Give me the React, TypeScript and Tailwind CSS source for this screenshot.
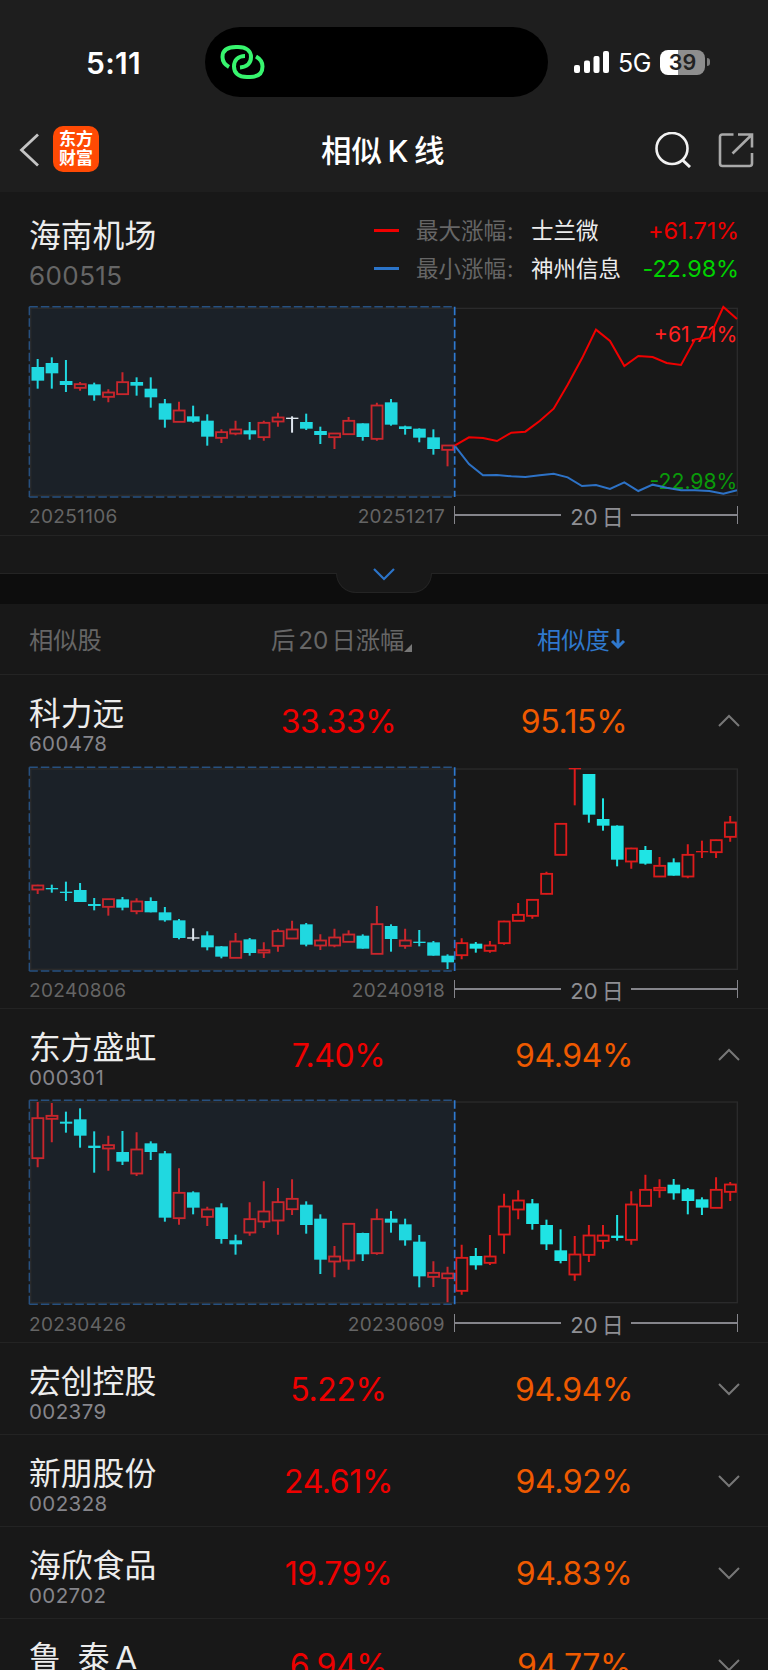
import { clsx } from "clsx";

// [kind, high, body top, body bottom, low]
type Candle = ["u" | "d" | "f", number, number, number, number];

type Stock = {
  name: string;
  code: string;
  gain: string;
  score: string;
  chart?: { from: string; to: string; top: number; bottom: number; candles: Candle[] };
};

const CURRENT: Candle[] = [
  ["d", 192, 216, 257, 281], ["d", 187, 204, 235, 281], ["d", 195, 258, 270, 291],
  ["u", 261, 267, 278, 287], ["d", 263, 268, 301, 317], ["u", 283, 292, 305, 322],
  ["u", 232, 261, 297, 299], ["d", 247, 261, 272, 302], ["d", 247, 281, 307, 338],
  ["d", 312, 325, 374, 398], ["u", 320, 346, 380, 380], ["d", 332, 364, 380, 383],
  ["d", 358, 377, 425, 452], ["u", 403, 411, 428, 444], ["u", 377, 403, 415, 421],
  ["d", 381, 406, 418, 434], ["u", 377, 383, 426, 437], ["u", 353, 367, 379, 395],
  ["f", 364, 370, 370, 413], ["d", 356, 381, 401, 405], ["d", 395, 408, 420, 447],
  ["u", 415, 415, 426, 462], ["u", 366, 377, 417, 420], ["d", 385, 385, 426, 437],
  ["u", 323, 331, 431, 437], ["d", 312, 322, 389, 392], ["d", 392, 394, 402, 419],
  ["d", 400, 401, 428, 442], ["d", 403, 427, 462, 479], ["u", 451, 451, 464, 514],
];

const KELIYUAN: Candle[] = [
  ["u", 389, 391, 403, 417], ["d", 389, 401, 401, 413], ["d", 380, 412, 412, 438],
  ["d", 384, 405, 441, 441], ["d", 429, 447, 453, 466], ["u", 432, 432, 455, 482],
  ["d", 426, 433, 458, 466], ["u", 430, 439, 468, 478], ["d", 427, 438, 472, 472],
  ["d", 456, 472, 496, 500], ["d", 492, 496, 549, 553], ["f", 520, 549, 549, 557],
  ["d", 529, 541, 577, 586], ["d", 573, 574, 605, 610], ["u", 534, 559, 608, 609],
  ["d", 549, 553, 594, 602], ["u", 562, 585, 592, 609], ["u", 521, 528, 572, 590],
  ["u", 497, 523, 550, 551], ["d", 504, 508, 569, 574], ["u", 538, 556, 571, 585],
  ["u", 521, 547, 571, 577], ["u", 526, 538, 560, 560], ["d", 538, 542, 581, 581],
  ["u", 453, 507, 596, 597], ["d", 508, 513, 552, 590], ["u", 521, 556, 572, 581],
  ["d", 525, 562, 562, 574], ["d", 558, 562, 602, 602], ["d", 598, 602, 622, 642],
  ["u", 550, 564, 600, 613], ["d", 561, 566, 581, 593], ["u", 558, 571, 587, 593],
  ["u", 497, 499, 564, 569], ["u", 444, 479, 497, 498], ["u", 432, 434, 482, 491],
  ["u", 350, 356, 416, 418], ["u", 206, 206, 299, 300], ["u", 41, 41, 41, 151],
  ["d", 57, 57, 179, 203], ["d", 130, 192, 212, 227], ["d", 211, 212, 314, 334],
  ["u", 278, 280, 319, 341], ["d", 273, 285, 326, 329], ["u", 306, 332, 364, 364],
  ["d", 310, 322, 362, 362], ["u", 268, 299, 364, 370], ["u", 257, 290, 290, 309],
  ["u", 254, 255, 291, 309], ["u", 183, 202, 245, 260],
];

const SHENGHONG: Candle[] = [
  ["u", 39, 87, 207, 235], ["u", 42, 80, 89, 160], ["d", 68, 100, 102, 131],
  ["d", 58, 91, 140, 176], ["d", 127, 172, 175, 251], ["u", 140, 168, 178, 245],
  ["d", 126, 189, 218, 228], ["u", 130, 181, 253, 261], ["d", 157, 163, 189, 213],
  ["d", 186, 193, 386, 398], ["u", 238, 311, 387, 407], ["d", 307, 310, 356, 376],
  ["u", 353, 361, 383, 411], ["d", 343, 355, 450, 464], ["d", 437, 454, 466, 497],
  ["u", 340, 390, 430, 440], ["u", 277, 367, 397, 417], ["u", 297, 339, 394, 437],
  ["u", 271, 329, 360, 378], ["d", 337, 347, 408, 434], ["d", 376, 389, 512, 555],
  ["u", 471, 502, 517, 565], ["u", 403, 404, 514, 542], ["d", 431, 432, 496, 516],
  ["u", 359, 390, 492, 497], ["d", 366, 389, 401, 431], ["d", 389, 406, 454, 470],
  ["d", 438, 458, 562, 595], ["u", 517, 551, 563, 594], ["u", 533, 553, 567, 640],
  ["u", 467, 506, 605, 617], ["d", 477, 501, 529, 542], ["u", 438, 502, 521, 528],
  ["u", 314, 352, 436, 494], ["u", 304, 334, 361, 391], ["d", 330, 343, 405, 422],
  ["d", 392, 408, 466, 483], ["d", 421, 484, 516, 523], ["u", 441, 496, 556, 575],
  ["u", 408, 439, 497, 519], ["u", 408, 439, 455, 479], ["d", 378, 442, 445, 455],
  ["u", 307, 346, 452, 467], ["u", 257, 302, 350, 351], ["u", 271, 296, 303, 326],
  ["d", 270, 287, 313, 332], ["d", 297, 301, 336, 376], ["d", 325, 331, 356, 378],
  ["u", 265, 302, 356, 357], ["u", 279, 286, 308, 336],
];

const MAX_LINE =
  "1364,452 1407,427 1449,429 1491,438 1534,413 1576,410 1619,378 1661,341 1703,269 1746,190 1788,104 1830,138 1873,213 1915,183 1958,186 2000,204 2043,210 2085,133 2128,127 2170,36 2211,72";
const MIN_LINE =
  "1364,452 1407,507 1449,541 1491,540 1534,544 1576,546 1619,541 1661,536 1703,547 1746,573 1788,570 1830,582 1873,562 1915,588 1958,569 2000,578 2043,586 2085,586 2128,588 2170,596 2211,586";

const STOCKS: Stock[] = [
  {
    name: "科力远", code: "600478", gain: "33.33%", score: "95.15%",
    chart: { from: "20240806", to: "20240918", top: 37, bottom: 648, candles: KELIYUAN },
  },
  {
    name: "东方盛虹", code: "000301", gain: "7.40%", score: "94.94%",
    chart: { from: "20230426", to: "20230609", top: 34, bottom: 646, candles: SHENGHONG },
  },
  { name: "宏创控股", code: "002379", gain: "5.22%", score: "94.94%" },
  { name: "新朋股份", code: "002328", gain: "24.61%", score: "94.92%" },
  { name: "海欣食品", code: "002702", gain: "19.79%", score: "94.83%" },
  { name: "鲁 泰\u2009A", code: "", gain: "6.94%", score: "94.77%" },
];

function CandleMark({ data, index }: { data: Candle; index: number }) {
  const [kind, high, top, bottom, low] = data;
  const x = 113 + index * 42.4;
  const past = index < 30;
  const color =
    kind === "f" ? "#dfe6ee" : kind === "d" ? (past ? "#20d8e0" : "#1fe4e4") : past ? "#c9262c" : "#dc1b1b";

  if (bottom - top < 4) {
    return (
      <g fill={color}>
        <rect x={x - 3} y={high} width={6} height={low - high} />
        <rect x={x - 18} y={top - 2} width={37} height={bottom - top + 4} />
      </g>
    );
  }
  if (kind === "d") {
    return (
      <g fill={color}>
        <rect x={x - 3} y={high} width={6} height={low - high} />
        <rect x={x - 18.5} y={top} width={38} height={bottom - top} />
      </g>
    );
  }
  return (
    <g fill="none" stroke={color} strokeWidth={5.5}>
      <path d={`M${x} ${high}V${top}M${x} ${bottom}V${low}`} strokeWidth={6} />
      <rect x={x - 16} y={top + 0.5} width={33} height={bottom - top} />
    </g>
  );
}

function Chart({
  top,
  bottom,
  candles,
  children,
}: {
  top: number;
  bottom: number;
  candles: Candle[];
  children?: React.ReactNode;
}) {
  const frameTop = top + 5;
  const frameBottom = bottom - 5;
  return (
    <svg
      viewBox={`0 0 2304 ${bottom > 620 ? 666 : 624}`}
      className={clsx("block w-full shrink-0", bottom > 620 ? "h-[222px]" : "h-[208px]")}
    >
      <rect x={88} y={top} width={1275} height={bottom - top} fill="#1b2128" />
      <rect x={92} y={frameTop} width={2120} height={frameBottom - frameTop} fill="none" stroke="#2a2a2b" strokeWidth={4} />
      {candles.map((c, i) => (
        <CandleMark key={i} data={c} index={i} />
      ))}
      <path
        d={`M88 ${top}H1363M88 ${bottom}H1363M88 ${top}V${bottom}`}
        stroke="#27507f"
        strokeWidth={4.5}
        strokeDasharray="25.5 9"
      />
      <path d={`M1364 ${top}V${bottom}`} stroke="#2e79d0" strokeWidth={5} strokeDasharray="25.5 9" />
      {children}
    </svg>
  );
}

function Axis({ from, to }: { from: string; to: string }) {
  return (
    <div className="mt-[3px] flex h-[18px] items-center pl-[29px] text-[19px] leading-none tracking-[0.35px] text-[#656565]">
      <div className="flex w-[416px] justify-between pt-[3px]">
        <span>{from}</span>
        <span>{to}</span>
      </div>
      <div className="ml-[9px] flex h-[18px] w-[284px] items-center justify-between border-x-[1.5px] border-[#85858b]">
        <span className="h-[2px] w-[106px] bg-[#85858b]" />
        <span className="flex gap-[4px] pt-[3px] pl-[2px] text-[22px] tracking-normal whitespace-nowrap text-[#8e8e93]">
          <span>20</span>
          <span>日</span>
        </span>
        <span className="h-[2px] w-[106px] bg-[#85858b]" />
      </div>
    </div>
  );
}

function StatusBar() {
  return (
    <div className="flex h-[108px] shrink-0 pt-[27px]">
      <div className="w-[205px] pt-[20px] pl-[86px] text-[30px] leading-[32px] font-semibold tracking-[0.3px] text-white">
        5:11
      </div>
      <div className="h-[70px] w-[343px] rounded-[35px] bg-black pt-[17px] pl-[15px]">
        <svg viewBox="0 0 46 36" className="h-[36px] w-[46px]" fill="none" stroke="#37f56e" strokeWidth={4}>
          <path d="M9 23C4.500 20.500 2.500 17 2.500 13C2.500 6 7 3 16 3H18C27 3 31 7.500 31 13C31 19 27 23 20 23.500" />
          <path d="M36 12.500C40.500 15 42.500 18.500 42.500 22.500C42.500 29.500 38 33 30 33H27C18 33 14 28.500 14 22.500C14 16.500 18 12 25 12" />
        </svg>
      </div>
      <div className="flex h-[70px] items-center pl-[26px] text-white">
        <svg viewBox="0 0 36 22" className="h-[22px] w-[36px]" fill="#fff">
          <rect x="0" y="14" width="6" height="8" rx="2" />
          <rect x="10" y="9.500" width="6" height="12.500" rx="2" />
          <rect x="19.500" y="5" width="6" height="17" rx="2" />
          <rect x="29" y="0" width="6" height="22" rx="2" />
        </svg>
        <span className="ml-[8px] w-[34px] pt-[3px] text-[25px] tracking-[-0.5px]">5G</span>
        <div className="ml-[8px] flex h-[25px] w-[45px] items-center justify-center rounded-[8px] bg-[linear-gradient(90deg,#fff_39%,#8e8e8e_39%)] pt-px text-[21.5px] font-semibold text-[#222]">
          39
        </div>
        <div className="ml-[1.5px] h-[8px] w-[3px] rounded-r-full bg-[#7d7d7d]" />
      </div>
    </div>
  );
}

function NavBar() {
  return (
    <div className="flex h-[84px] shrink-0 items-center">
      <svg viewBox="0 0 22 34" className="ml-[18px] h-[34px] w-[22px]" fill="none" stroke="#c4c4c4" strokeWidth={2.8}>
        <path d="M20 1.500L3.500 17L20 32.500" />
      </svg>
      <div className="-mt-[2px] ml-[13px] flex size-[46px] flex-col items-center justify-center rounded-[10px] bg-[#ff4a04] text-[17px] leading-[19px] font-bold text-white">
        <span>东方</span>
        <span>财富</span>
      </div>
      <h1 className="ml-[222px] flex w-[125px] gap-[5.5px] pt-px text-[30.500px] leading-[40px] font-medium whitespace-nowrap text-white">
        <span>相似</span>
        <span>K</span>
        <span>线</span>
      </h1>
      <svg viewBox="0 0 38 36" className="ml-[208px] h-[36px] w-[38px]" fill="none" stroke="#f2f2f2" strokeWidth={2.6}>
        <circle cx="18" cy="16.500" r="15.500" />
        <path d="M28.500 28L36 35" strokeWidth={3} />
      </svg>
      <svg viewBox="0 0 36 36" className="-mt-px ml-[26px] h-[36px] w-[36px]" fill="none" stroke="#a9a9a9" strokeWidth={2.6}>
        <path d="M15.500 2.500H4.500Q2 2.500 2 5V31.500Q2 34 4.500 34H31.500Q34 34 34 31.500V21" />
        <path d="M20 2.500H34V15.500M33.500 3L14.500 21.500" />
      </svg>
    </div>
  );
}

function Legend({ label, name, value, up }: { label: string; name: string; value: string; up?: boolean }) {
  return (
    <div className="flex h-[38px] items-center text-[22.5px]">
      <span className={clsx("-mt-px h-[2.5px] w-[25px]", up ? "bg-[#f00000]" : "bg-[#2b74c9]")} />
      <span className="ml-[17px] w-[115px] whitespace-nowrap text-[#666]">
        {label}
        <span className="ml-px">:</span>
      </span>
      <span className="whitespace-nowrap text-[#ececec]">{name}</span>
      <span className={clsx("ml-auto text-[23.5px] tracking-[-0.15px]", up ? "text-[#ee0000]" : "text-[#00d200]")}>
        {value}
      </span>
    </div>
  );
}

function StockRow({ stock }: { stock: Stock }) {
  const { name, code, gain, score, chart } = stock;
  return (
    <div className={clsx("shrink-0 border-b border-[#232323]", chart ? "h-[334px]" : "h-[92px]")}>
      <div className={clsx("flex items-start", chart ? "h-[80px]" : "h-[81px]")}>
        <div className="w-[221px] pt-[19px] pl-[29px]">
          <div className="text-[31.8px] leading-[39px] [word-spacing:8px] whitespace-pre text-[#ececec]">{name}</div>
          {code && <div className="text-[20.5px] leading-[22px] tracking-[0.4px] text-[#85858b]">{code}</div>}
        </div>
        <div className="w-[235px] pt-[28px] text-center text-[32px] leading-[38px] tracking-[-0.4px] text-[#ee0000]">{gain}</div>
        <div className="w-[235px] pt-[28px] pl-px text-center text-[32px] leading-[38px] tracking-[-0.4px] text-[#ef5a00]">{score}</div>
        <svg viewBox="0 0 22 14" className="mt-[38.5px] ml-[27px] h-[14px] w-[22px]" fill="none" stroke="#777" strokeWidth={2}>
          <path d={chart ? "M1 12L11 2L21 12" : "M1 2L11 12L21 2"} />
        </svg>
      </div>
      {chart && (
        <>
          <Chart top={chart.top} bottom={chart.bottom} candles={chart.candles} />
          <Axis from={chart.from} to={chart.to} />
        </>
      )}
    </div>
  );
}

export default function App() {
  return (
    <main className="flex h-[1670px] w-[768px] flex-col overflow-hidden bg-[#181818] font-['Inter','Noto_Sans_CJK_SC',sans-serif]">
      <header className="h-[192px] shrink-0 bg-[#1e1e1e]">
        <StatusBar />
        <NavBar />
      </header>

      <section className="h-[344px] shrink-0 border-b border-[#242424]">
        <div className="flex h-[103px] justify-between pr-[29px] pl-[29px]">
          <div className="pt-[24px]">
            <div className="text-[31.8px] leading-[40px] text-[#ececec]">海南机场</div>
            <div className="mt-[4px] text-[26px] leading-[32px] tracking-[0.4px] text-[#666]">600515</div>
          </div>
          <div className="w-[365px] pt-[20px]">
            <Legend label="最大涨幅" name="士兰微" value="+61.71%" up />
            <Legend label="最小涨幅" name="神州信息" value="-22.98%" />
          </div>
        </div>
        <Chart top={35} bottom={606} candles={CURRENT}>
          <text x={2212} y={140} textAnchor="end" fontSize={64} fill="#ff2020">
            +61.71%
          </text>
          <text x={2212} y={583} textAnchor="end" fontSize={63.5} fill="#0a9a0a">
            -22.98%
          </text>
          <polyline points={MIN_LINE} fill="none" stroke="#2d72c6" strokeWidth={6} />
          <polyline points={MAX_LINE} fill="none" stroke="#f00000" strokeWidth={6} />
        </Chart>
        <Axis from="20251106" to="20251217" />
      </section>

      <div className="h-[37px] shrink-0" />
      <div className="flex h-[31px] shrink-0 justify-center border-t border-[#242424] bg-[#0d0d0d]">
        <div className="-mt-px flex h-[20px] w-[96px] justify-center rounded-b-[20px] border border-t-0 border-[#242424] bg-[#181818]">
          <svg viewBox="0 0 22 14" className="-mt-[6px] h-[14px] w-[22px]" fill="none" stroke="#2b74c9" strokeWidth={2.2}>
            <path d="M1 2L11 12L21 2" />
          </svg>
        </div>
      </div>

      <div className="flex h-[71px] shrink-0 items-center border-b border-[#242424] pt-[2px] text-[24.3px] text-[#666]">
        <span className="w-[243px] pl-[29px]">相似股</span>
        <span className="flex w-[294px] items-end gap-[3px] pl-[28px] whitespace-nowrap">
          <span>后</span>
          <span>20</span>
          <span>日涨幅</span>
          <svg viewBox="0 0 8 8" className="mb-[6px] -ml-[3px] size-[8px]" fill="#777">
            <path d="M8 0V8H0Z" />
          </svg>
        </span>
        <span className="flex items-center text-[#2f78cd]">
          相似度
          <svg viewBox="0 0 16 22" className="-mt-[3px] h-[22px] w-[16px]" fill="none" stroke="#2f78cd" strokeWidth={3}>
            <path d="M8 1V19M2 13L8 19L14 13" />
          </svg>
        </span>
      </div>

      {STOCKS.map((s) => (
        <StockRow key={s.name} stock={s} />
      ))}
    </main>
  );
}
